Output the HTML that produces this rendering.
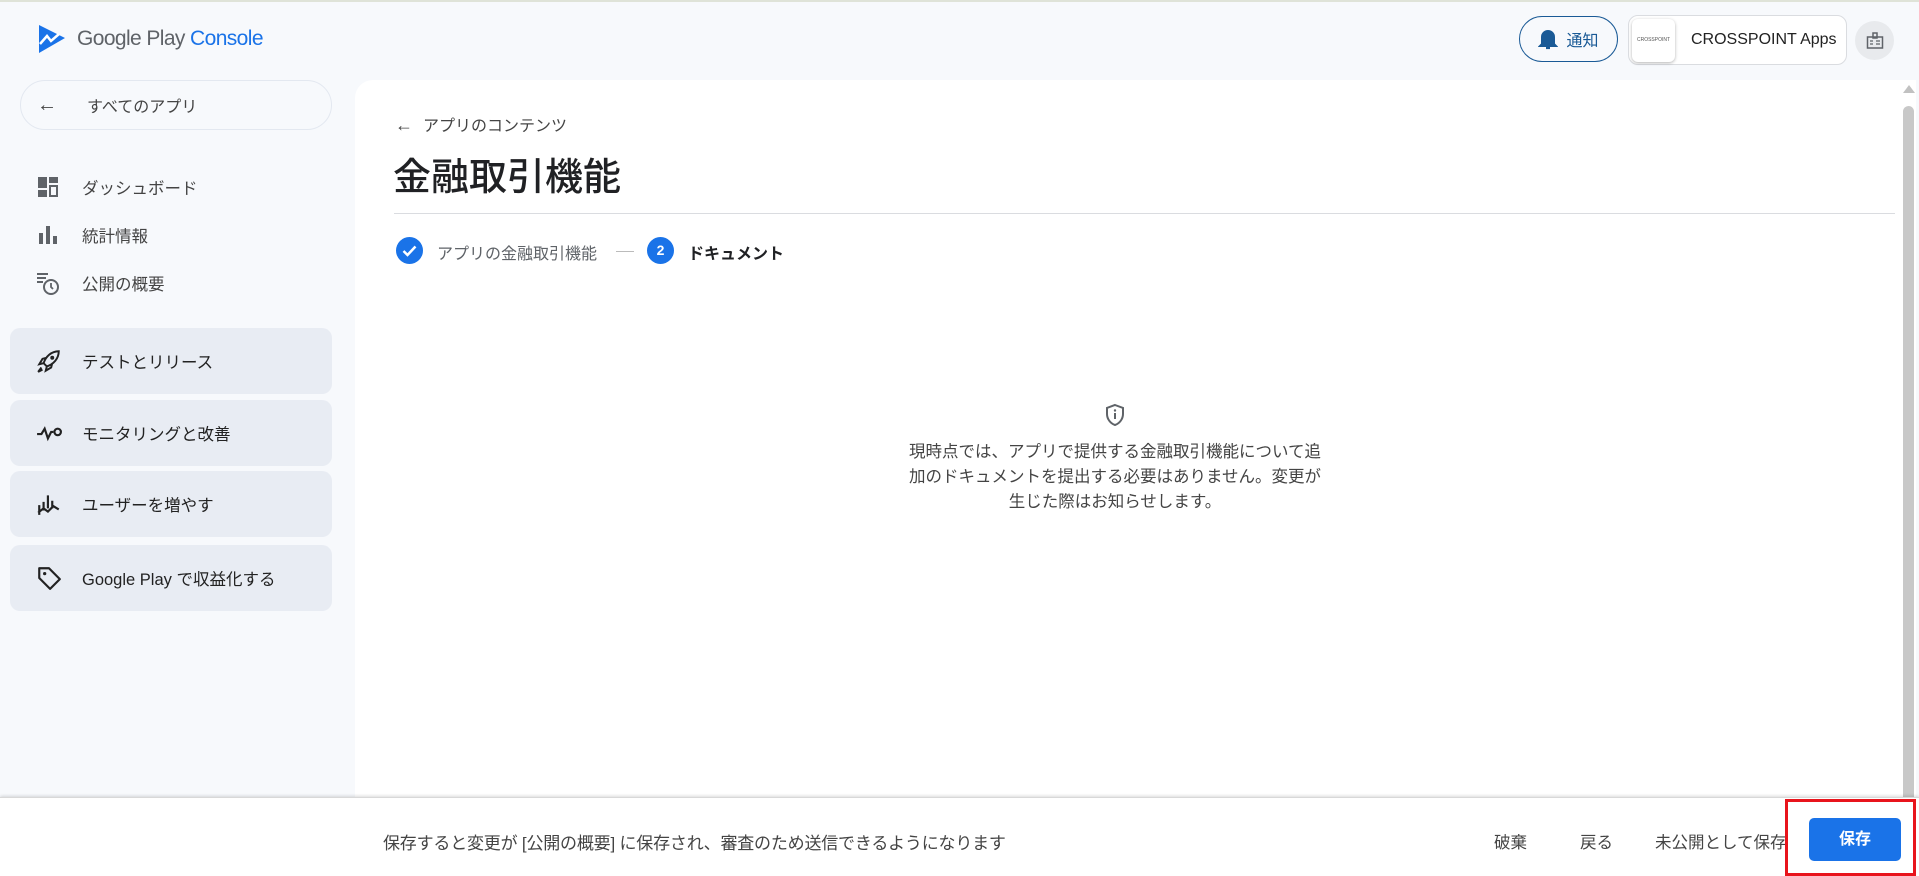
<!DOCTYPE html>
<html><head><meta charset="utf-8">
<style>
*{box-sizing:border-box;margin:0;padding:0}
body{width:1919px;height:876px;overflow:hidden;background:#f7f9fc;font-family:"Liberation Sans","Noto Sans CJK JP",sans-serif;color:#3c4043;position:relative}
.abs{position:absolute}
.topline{left:0;top:0;width:1919px;height:2px;background:#dfe3d8}
.logo{left:37px;top:24px;display:flex;align-items:center}
.logotxt{font-size:21px;color:#5f6368;margin-left:10px;letter-spacing:-0.6px}
.logotxt span{color:#1a73e8}
.pill{left:20px;top:80px;width:312px;height:50px;border:1.5px solid #e3e8f0;border-radius:25px;display:flex;align-items:center;font-size:16px;color:#444}
.nav{left:36px;display:flex;align-items:center;font-size:16.5px;color:#444}
.nav .ic{width:24px;height:24px;margin-right:22px}
.grp{left:10px;width:322px;height:66px;background:#e8ecf3;border-radius:10px;display:flex;align-items:center;padding-left:26px;font-size:16.5px;color:#222}
.grp .ic{width:26px;height:26px;margin-right:20px}
.card{left:355px;top:80px;width:1545px;height:720px;background:#fff;border-radius:18px 0 0 0}
.footer{left:0;top:797px;width:1919px;height:79px;background:#fff;border-top:1px solid #d8d8d8;box-shadow:0 -1px 3px rgba(0,0,0,.15)}
</style></head><body>
<div class="abs topline"></div>
<div class="abs logo">
<svg width="30" height="30" viewBox="0 0 30 30"><path d="M2 1 L28 14 L2 29 Z" fill="#1a73e8"/><path d="M3 20 L10 12 L14 17 L22 10" stroke="#fff" stroke-width="2.5" fill="none"/></svg>
<div class="logotxt">Google Play <span>Console</span></div>
</div>

<div class="abs pill"><span style="margin-left:16px;font-size:20px;color:#444">←</span><span style="margin-left:30px">すべてのアプリ</span></div>

<div class="abs nav" style="top:175px"><svg class="ic" viewBox="0 0 24 24"><rect x="2" y="2" width="9" height="11" fill="#5f6368"/><rect x="13" y="2" width="9" height="6" fill="#5f6368"/><rect x="2" y="15" width="9" height="7" fill="#5f6368"/><rect x="14" y="11" width="7" height="10" fill="none" stroke="#5f6368" stroke-width="2"/></svg>ダッシュボード</div>
<div class="abs nav" style="top:223px"><svg class="ic" viewBox="0 0 24 24"><rect x="3" y="10" width="4" height="11" fill="#5f6368"/><rect x="10" y="3" width="4" height="18" fill="#5f6368"/><rect x="17" y="13" width="4" height="8" fill="#5f6368"/></svg>統計情報</div>
<div class="abs nav" style="top:271px"><svg class="ic" viewBox="0 0 24 24"><path d="M1 3h11M1 7h9M1 11h6" stroke="#5f6368" stroke-width="2"/><circle cx="15" cy="16" r="7" fill="none" stroke="#5f6368" stroke-width="2"/><path d="M15 12v4l2 2" stroke="#5f6368" stroke-width="1.8" fill="none"/></svg>公開の概要</div>

<div class="abs grp" style="top:328px"><svg class="ic" viewBox="0 0 24 24"><path d="M21 3C14 3 9 8 7 14l3 3c6-2 11-7 11-14zM7 14l-4 1 3-5 4-1M10 17l-1 4 5-3 1-4M5 18l-3 4 4-2" stroke="#222" stroke-width="1.8" fill="none"/><circle cx="15" cy="9" r="1.8" fill="#222"/></svg>テストとリリース</div>
<div class="abs grp" style="top:400px"><svg class="ic" viewBox="0 0 24 24"><path d="M1 13h4l3-5 3 9 3-6h2" stroke="#222" stroke-width="2" fill="none"/><circle cx="20" cy="11" r="3" fill="none" stroke="#222" stroke-width="2"/></svg>モニタリングと改善</div>
<div class="abs grp" style="top:471px"><svg class="ic" viewBox="0 0 24 24"><path d="M3 22V13M7 18V10M11 16V4M15 16V9M2 20l5-4 4 3 5-5 5 3" stroke="#222" stroke-width="2" fill="none"/></svg>ユーザーを増やす</div>
<div class="abs grp" style="top:545px"><svg class="ic" viewBox="0 0 24 24"><path d="M3 3h9l10 10-9 9L3 12z" stroke="#222" stroke-width="2" fill="none" stroke-linejoin="round"/><circle cx="8" cy="8" r="1.5" fill="#222"/></svg>Google Play で収益化する</div>

<div class="abs" style="left:1519px;top:16px;width:99px;height:46px;border:1.5px solid #1a5a96;border-radius:23px;display:flex;align-items:center;justify-content:center;color:#1a5a96;font-size:16px">
<svg width="20" height="22" viewBox="0 0 20 22" style="margin-right:8px"><path d="M4 16V9a6 6 0 0 1 12 0v7l2 2H2z" fill="#1a5a96" stroke="#1a5a96" stroke-width="2"/><path d="M8 20h4" stroke="#1a5a96" stroke-width="2.2"/></svg>通知</div>
<div class="abs" style="left:1628px;top:15px;width:219px;height:50px;border:1px solid #dadce0;border-radius:10px;background:#fff;display:flex;align-items:center">
<div style="width:43px;height:43px;margin-left:3px;border-radius:6px;box-shadow:0 1px 3px rgba(0,0,0,.3);display:flex;align-items:center;justify-content:center;font-size:5px;color:#555">CROSSPOINT</div>
<span style="margin-left:16px;font-size:16px;color:#222">CROSSPOINT Apps</span></div>
<div class="abs" style="left:1855px;top:21px;width:39px;height:39px;border-radius:50%;background:#e8eaed;display:flex;align-items:center;justify-content:center">
<svg width="18" height="18" viewBox="0 0 18 18"><rect x="1.5" y="5" width="15" height="11" fill="none" stroke="#5f6368" stroke-width="1.5"/><rect x="7" y="1" width="4" height="5" fill="none" stroke="#5f6368" stroke-width="1.5"/><path d="M4 9h3M4 12h3M10 9h4M10 12h4" stroke="#5f6368" stroke-width="1.3"/></svg></div>

<div class="abs card"></div>
<div class="abs" style="left:395px;top:112px;font-size:16px;color:#444"><span style="font-size:18px;margin-right:10px">←</span>アプリのコンテンツ</div>
<div class="abs" style="left:393px;top:146px;font-size:38px;color:#202124;font-weight:500">金融取引機能</div>
<div class="abs" style="left:394px;top:213px;width:1501px;height:1px;background:#dadce0"></div>

<div class="abs" style="left:396px;top:237px;width:27px;height:27px;border-radius:50%;background:#1a73e8"><svg width="27" height="27" viewBox="0 0 27 27"><path d="M7.5 14l4 4 8-8.5" stroke="#fff" stroke-width="2.5" fill="none"/></svg></div>
<div class="abs" style="left:437px;top:240px;font-size:16px;color:#5f6368">アプリの金融取引機能</div>
<div class="abs" style="left:616px;top:251px;width:18px;height:1px;background:#bbb"></div>
<div class="abs" style="left:647px;top:237px;width:27px;height:27px;border-radius:50%;background:#1a73e8;color:#fff;font-size:14px;font-weight:bold;text-align:center;line-height:27px">2</div>
<div class="abs" style="left:688px;top:240px;font-size:16px;color:#202124;font-weight:bold">ドキュメント</div>

<svg class="abs" style="left:1104px;top:403px" width="22" height="24" viewBox="0 0 22 24"><path d="M11 2l8 3v6c0 5-3.5 9.5-8 11-4.5-1.5-8-6-8-11V5z" fill="none" stroke="#5f6368" stroke-width="2"/><path d="M11 10v6" stroke="#5f6368" stroke-width="2"/><circle cx="11" cy="7.5" r="1.2" fill="#5f6368"/></svg>
<div class="abs" style="left:890px;top:440px;width:450px;text-align:center;font-size:16.5px;line-height:25px;color:#444">現時点では、アプリで提供する金融取引機能について追<br>加のドキュメントを提出する必要はありません。変更が<br>生じた際はお知らせします。</div>

<div class="abs" style="left:1900px;top:80px;width:16px;height:717px;background:#fff"></div>
<div class="abs" style="left:1903px;top:85px;width:0;height:0;border-left:6px solid transparent;border-right:6px solid transparent;border-bottom:8px solid #c1c1c1"></div>
<div class="abs" style="left:1903px;top:106px;width:11px;height:700px;background:#c8c8c8;border-radius:6px"></div>

<div class="abs footer"></div>
<div class="abs" style="left:383px;top:829px;font-size:17px;color:#444;letter-spacing:-0.2px">保存すると変更が [公開の概要] に保存され、審査のため送信できるようになります</div>
<div class="abs" style="left:1494px;top:829px;font-size:16.5px;color:#444">破棄</div>
<div class="abs" style="left:1580px;top:829px;font-size:16.5px;color:#444">戻る</div>
<div class="abs" style="left:1655px;top:829px;width:133px;overflow:hidden;white-space:nowrap;font-size:16.5px;color:#444">未公開として保存</div>
<div class="abs" style="left:1809px;top:818px;width:92px;height:43px;background:#1a73e8;border-radius:5px;color:#fff;font-size:16px;font-weight:bold;text-align:center;line-height:43px">保存</div>
<div class="abs" style="left:1785px;top:799px;width:131px;height:77px;border:3px solid #e8141c"></div>
</body></html>
